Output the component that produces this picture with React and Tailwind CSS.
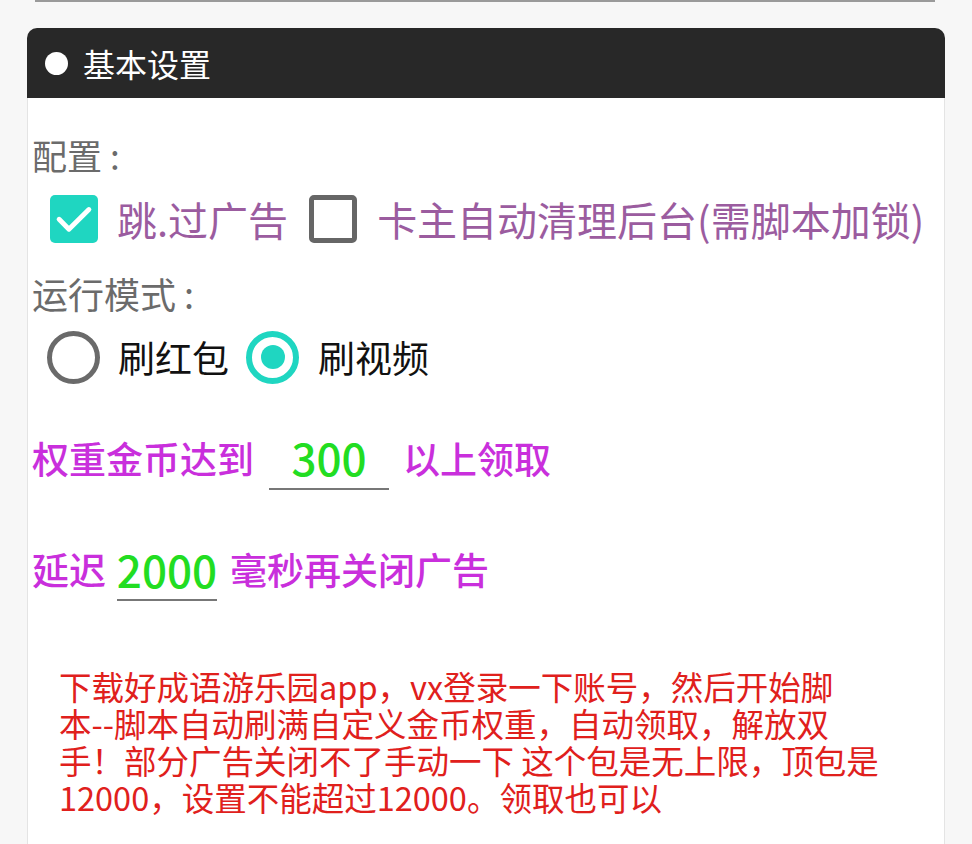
import React from "react";

const cjk = { fontFamily: '"Noto Sans CJK SC", "Noto Sans", sans-serif' };

function CheckBox({ checked }) {
  if (checked) {
    return (
      <div className="w-[48px] h-[48px] rounded-[5px] bg-[#1fd6c1] flex items-center justify-center shrink-0">
        <svg width="42" height="42" viewBox="0 0 24 24" fill="none">
          <path d="M3.5 12.2l5.6 5.6L20.5 6.6" stroke="#fff" strokeWidth="2.8" strokeLinecap="round" strokeLinejoin="round" />
        </svg>
      </div>
    );
  }
  return <div className="w-[48px] h-[48px] rounded-[5px] border-[5px] border-[#666] bg-white shrink-0" />;
}

function Radio({ checked }) {
  if (checked) {
    return (
      <div className="w-[53px] h-[53px] rounded-full border-[6px] border-[#1fd6c1] flex items-center justify-center shrink-0">
        <div className="w-[24px] h-[24px] rounded-full bg-[#1fd6c1]" />
      </div>
    );
  }
  return <div className="w-[53px] h-[53px] rounded-full border-[5px] border-[#6a6a6a] shrink-0" />;
}

export default function App() {
  return (
    <div className="min-h-screen bg-[#f7f7f7] overflow-hidden" style={cjk}>
      {/* previous card edge */}
      <div className="ml-[35px] w-[900px] h-[2px] bg-[#9a9a9a]" />

      <div className="ml-[27px] mt-[26px] w-[918px]">
        {/* HEADER */}
        <div className="h-[70px] bg-[#282828] rounded-t-[10px] flex items-center pl-[18px] gap-[15px]">
          <div className="w-[23px] h-[23px] rounded-full bg-white" />
          <span className="text-[32px] text-white leading-none">基本设置</span>
        </div>

        {/* BODY */}
        <div className="bg-white border-x border-[#e4e4e4] pl-[4px] pt-[32px] pb-[60px]">
          <div className="h-[50px] leading-[50px] text-[35px] text-[#6b6b6b]">
            配置<span className="ml-[8px]">:</span>
          </div>

          <div className="mt-[7px] h-[64px] flex items-center pl-[18px] text-[40px] text-[#9b5c9f]">
            <CheckBox checked />
            <span className="ml-[19px] leading-none">跳.过广告</span>
            <div className="ml-[21px]">
              <CheckBox />
            </div>
            <span className="ml-[20px] leading-none whitespace-nowrap">卡主自动清理后台(需脚本加锁)</span>
          </div>

          <div className="mt-[17px] h-[50px] leading-[50px] text-[36px] text-[#6b6b6b]">
            运行模式<span className="ml-[8px]">:</span>
          </div>

          <div className="mt-[7px] h-[64px] flex items-center pl-[15px] text-[37px] text-[#111]">
            <Radio />
            <span className="ml-[18px] leading-none">刷红包</span>
            <div className="ml-[17px]">
              <Radio checked />
            </div>
            <span className="ml-[19px] leading-none">刷视频</span>
          </div>

          <div className="mt-[37px] h-[64px] flex items-center text-[37px] text-[#c92fdc] font-medium">
            <span className="leading-none">权重金币达到</span>
            <div className="ml-[15px] w-[120px] h-[64px] border-b-2 border-[#777] flex items-center justify-center text-[44px] text-[#22dd22] font-medium">
              300
            </div>
            <span className="ml-[14px] leading-none">以上领取</span>
          </div>

          <div className="mt-[48px] h-[63px] flex items-center text-[37px] text-[#c92fdc] font-medium">
            <span className="leading-none">延迟</span>
            <div className="ml-[11px] w-[100px] h-[63px] border-b-2 border-[#777] flex items-center justify-center text-[44px] text-[#22dd22] font-medium">
              2000
            </div>
            <span className="ml-[13px] leading-none">毫秒再关闭广告</span>
          </div>

          <p className="mt-[66px] ml-[27px] text-[32.5px] leading-[37px] text-[#e0201c]">
            下载好成语游乐园app，vx登录一下账号，然后开始脚
            <br />
            本--脚本自动刷满自定义金币权重，自动领取，解放双
            <br />
            手！部分广告关闭不了手动一下 这个包是无上限，顶包是
            <br />
            12000，设置不能超过12000。领取也可以
          </p>
        </div>
      </div>
    </div>
  );
}
